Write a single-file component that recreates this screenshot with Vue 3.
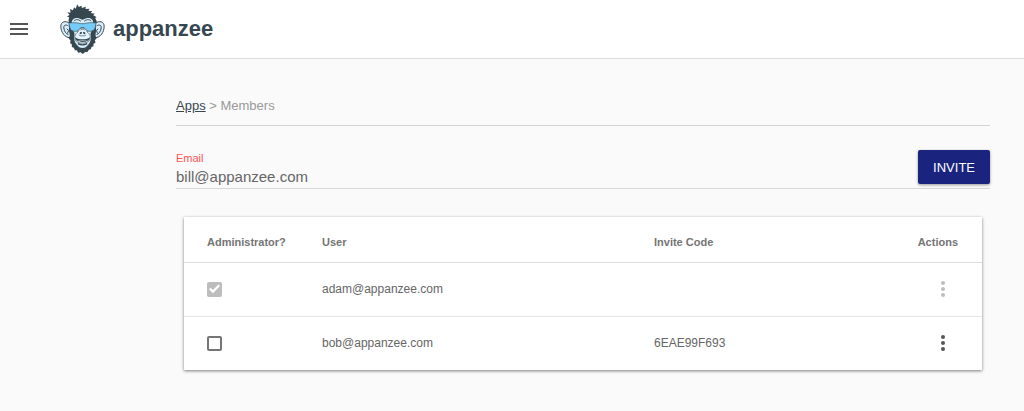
<script setup>
import { ref } from 'vue';

const email = ref('bill@appanzee.com');

const members = ref([
    { user: 'adam@appanzee.com', code: '', admin: true, locked: true },
    { user: 'bob@appanzee.com', code: '6EAE99F693', admin: false, locked: false }
]);
</script>

<template>
    <div class="app">
        <header class="toolbar">
            <button class="btn-menu" type="button" aria-label="Menu">
                <svg width="18" height="12" viewBox="0 0 18 12">
                    <path d="M0 0h18v2H0zM0 5h18v2H0zM0 10h18v2H0z" fill="#555" />
                </svg>
            </button>
            <svg class="logo" viewBox="30 8 134 150" aria-hidden="true">
                <!-- ears -->
                <g fill="#d9eefa" stroke="#37474f" stroke-width="3">
                    <path d="M59 66C47 57 32 60 32 75c0 18 12 34 27 34l9-8V68z" />
                    <path d="M135 66c12-9 27-6 27 9 0 18-12 34-27 34l-9-8V68z" />
                </g>
                <g fill="none" stroke="#37474f" stroke-width="3">
                    <path d="M55 74c-9-6-15-2-14 6 1 10 7 18 14 20M50 82l5 6-3 8" />
                    <path d="M139 74c9-6 15-2 14 6-1 10-7 18-14 20M144 82l-5 6 3 8" />
                </g>
                <!-- hair and beard -->
                <path
                    d="M58 68L55 58 57 47 50 47 58 40 51 33 61 34 60 23 68 27 72 18 77 22 81 9 86 17 94 13 95 20 107 16 106 23 118 22 115 29 126 29 122 35 134 37 129 42 139 47 135 50 140 60 136 70 138 85 136 102 139 112 134 116 136 124 130 127 130 135 124 137 122 144 116 145 112 152 105 152 98 158 91 153 84 154 80 147 74 147 71 139 65 137 65 129 60 126 61 117 56 112 59 102 56 86z"
                    fill="#37474f"
                />
                <!-- face -->
                <path
                    d="M65 65c-1-11 8-16 18-15 7 1 10 5 14 5s7-4 14-5c10-1 19 4 18 15l-1 20c-7 6-8 12-6 19 2 9-2 20-8 26-4 6-10 10-17 10s-13-4-17-10c-6-6-10-17-8-26 2-7 1-13-6-19z"
                    fill="#d9eefa"
                />
                <path d="M71 59c6-6 15-5 21 1M102 60c6-6 15-7 21-1" fill="none" stroke="#37474f" stroke-width="3" />
                <!-- glasses -->
                <path
                    d="M56 65c14-2 27-1 36 2h10c9-3 22-4 36-2l-3 14c-2 8-9 11-17 11-8 0-13-5-16-11h-10c-3 6-8 11-16 11-9 0-15-3-17-11z"
                    fill="#76ccf8"
                    stroke="#37474f"
                    stroke-width="2"
                />
                <!-- muzzle -->
                <path
                    d="M83 92c1-8 7-12 14-12s13 4 14 12c9 6 11 14 8 23-5 14-39 14-44 0-3-9-1-17 8-23z"
                    fill="#e5f4fc"
                    stroke="#37474f"
                    stroke-width="2"
                />
                <path d="M86 100c3 4 7 4 11 3 4 1 8 1 11-3M90 87c2-3 4-3 7-3s5 0 7 3" fill="none" stroke="#37474f" stroke-width="2" />
                <g fill="#37474f">
                    <ellipse cx="92" cy="95" rx="4" ry="3" transform="rotate(-35 92 95)" />
                    <ellipse cx="102" cy="95" rx="4" ry="3" transform="rotate(35 102 95)" />
                    <path d="M74 108c7 5 15 6 23 6s16-1 23-6c-2 10-10 14-23 14s-21-4-23-14z" />
                </g>
                <path d="M82 115q15 5 30 0-4 4-15 4t-15-4z" fill="#fff" />
                <path d="M83 127q14 7 28 0" fill="none" stroke="#37474f" stroke-width="4" />
            </svg>
            <span class="brand">appanzee</span>
        </header>

        <main class="content">
            <nav class="breadcrumb">
                <a href="#">Apps</a> &gt; Members
            </nav>

            <form class="invite-form" @submit.prevent>
                <div class="field">
                    <label for="email">Email</label>
                    <input id="email" v-model="email" type="text" />
                </div>
                <button class="btn-invite" type="submit">INVITE</button>
            </form>

            <div class="card">
                <table class="members">
                    <thead>
                        <tr>
                            <th class="col-admin">Administrator?</th>
                            <th class="col-user">User</th>
                            <th>Invite Code</th>
                            <th class="col-actions">Actions</th>
                        </tr>
                    </thead>
                    <tbody>
                        <tr v-for="member in members" :key="member.user">
                            <td>
                                <input
                                    v-model="member.admin"
                                    class="check"
                                    type="checkbox"
                                    :disabled="member.locked"
                                    :aria-label="'Administrator ' + member.user"
                                />
                            </td>
                            <td>{{ member.user }}</td>
                            <td>{{ member.code }}</td>
                            <td class="col-actions">
                                <button class="btn-more" type="button" :disabled="member.locked" aria-label="Actions">
                                    <svg width="6" height="16" viewBox="0 0 6 16" fill="currentColor">
                                        <circle cx="3" cy="2" r="2" />
                                        <circle cx="3" cy="8" r="2" />
                                        <circle cx="3" cy="14" r="2" />
                                    </svg>
                                </button>
                            </td>
                        </tr>
                    </tbody>
                </table>
            </div>
        </main>
    </div>
</template>

<style>
body {
    margin: 0;
    background-color: #fafafa;
}
</style>

<style scoped>
.app {
    font-family: "Liberation Sans", Arial, sans-serif;
    color: #666;
}

button {
    border: none;
    background: none;
    padding: 0;
    font-family: inherit;
    cursor: pointer;
}

.toolbar {
    display: flex;
    align-items: center;
    height: 58px;
    padding: 0 10px;
    background-color: #fff;
    border-bottom: 1px solid #dcdcdc;
}

.btn-menu {
    display: flex;
    margin-right: 32px;
}

.logo {
    width: 45px;
    height: 50px;
    margin-right: 8px;
}

.brand {
    color: #37474f;
    font-size: 22px;
    font-weight: bold;
}

.content {
    padding: 38px 34px 40px 176px;
}

.breadcrumb {
    padding-bottom: 10px;
    border-bottom: 1px solid #d4d4d4;
    color: #999;
    font-size: 13px;
    line-height: 18px;
}

.breadcrumb a {
    color: #37474f;
}

.invite-form {
    display: flex;
    align-items: flex-start;
    margin-top: 24px;
    padding-bottom: 2px;
    border-bottom: 1px solid #d8d8d8;
}

.field {
    display: flex;
    flex-direction: column;
    flex: 1;
}

.field label {
    color: #ff5252;
    font-size: 11px;
    line-height: 16px;
}

.field input {
    height: 20px;
    padding: 0;
    border: none;
    outline: none;
    background: none;
    color: #666;
    font-family: inherit;
    font-size: 15px;
}

.btn-invite {
    height: 34px;
    padding: 0 15px;
    border-radius: 2px;
    background-color: #1a237e;
    color: #fff;
    font-size: 13px;
    box-shadow: 0 1px 3px rgba(0, 0, 0, 0.4);
}

.card {
    margin: 28px 8px 0;
    background-color: #fff;
    box-shadow: 0 1px 3px rgba(0, 0, 0, 0.5);
}

.members {
    width: 100%;
    table-layout: fixed;
    border-collapse: collapse;
    text-align: left;
}

.members th {
    box-sizing: border-box;
    height: 45px;
    padding: 6px 0 0 23px;
    border-bottom: 1px solid #dcdcdc;
    color: #757575;
    font-size: 11px;
    line-height: 16px;
}

.members td {
    height: 53px;
    padding: 0 0 0 23px;
    font-size: 12px;
}

.members tbody tr + tr td {
    border-top: 1px solid #e6e6e6;
}

.members .col-admin {
    width: 115px;
}

.members .col-user {
    width: 332px;
}

.members .col-actions {
    padding-right: 24px;
    text-align: right;
}

.check {
    appearance: none;
    display: block;
    width: 15px;
    height: 15px;
    margin: 0;
    border: 2px solid #757575;
    border-radius: 2px;
}

.check:checked {
    background-color: #757575;
}

.check:disabled {
    border-color: #bdbdbd;
    background-color: #bdbdbd;
}

.check:checked::before {
    content: "";
    display: block;
    width: 11px;
    height: 11px;
    background-color: #fff;
    clip-path: polygon(0 52%, 14% 38%, 36% 60%, 86% 8%, 100% 22%, 36% 88%);
}

.btn-more {
    margin-right: 12px;
    color: #555;
    vertical-align: middle;
}

.btn-more svg {
    display: block;
}

.btn-more:disabled {
    color: #bdbdbd;
    cursor: default;
}
</style>
